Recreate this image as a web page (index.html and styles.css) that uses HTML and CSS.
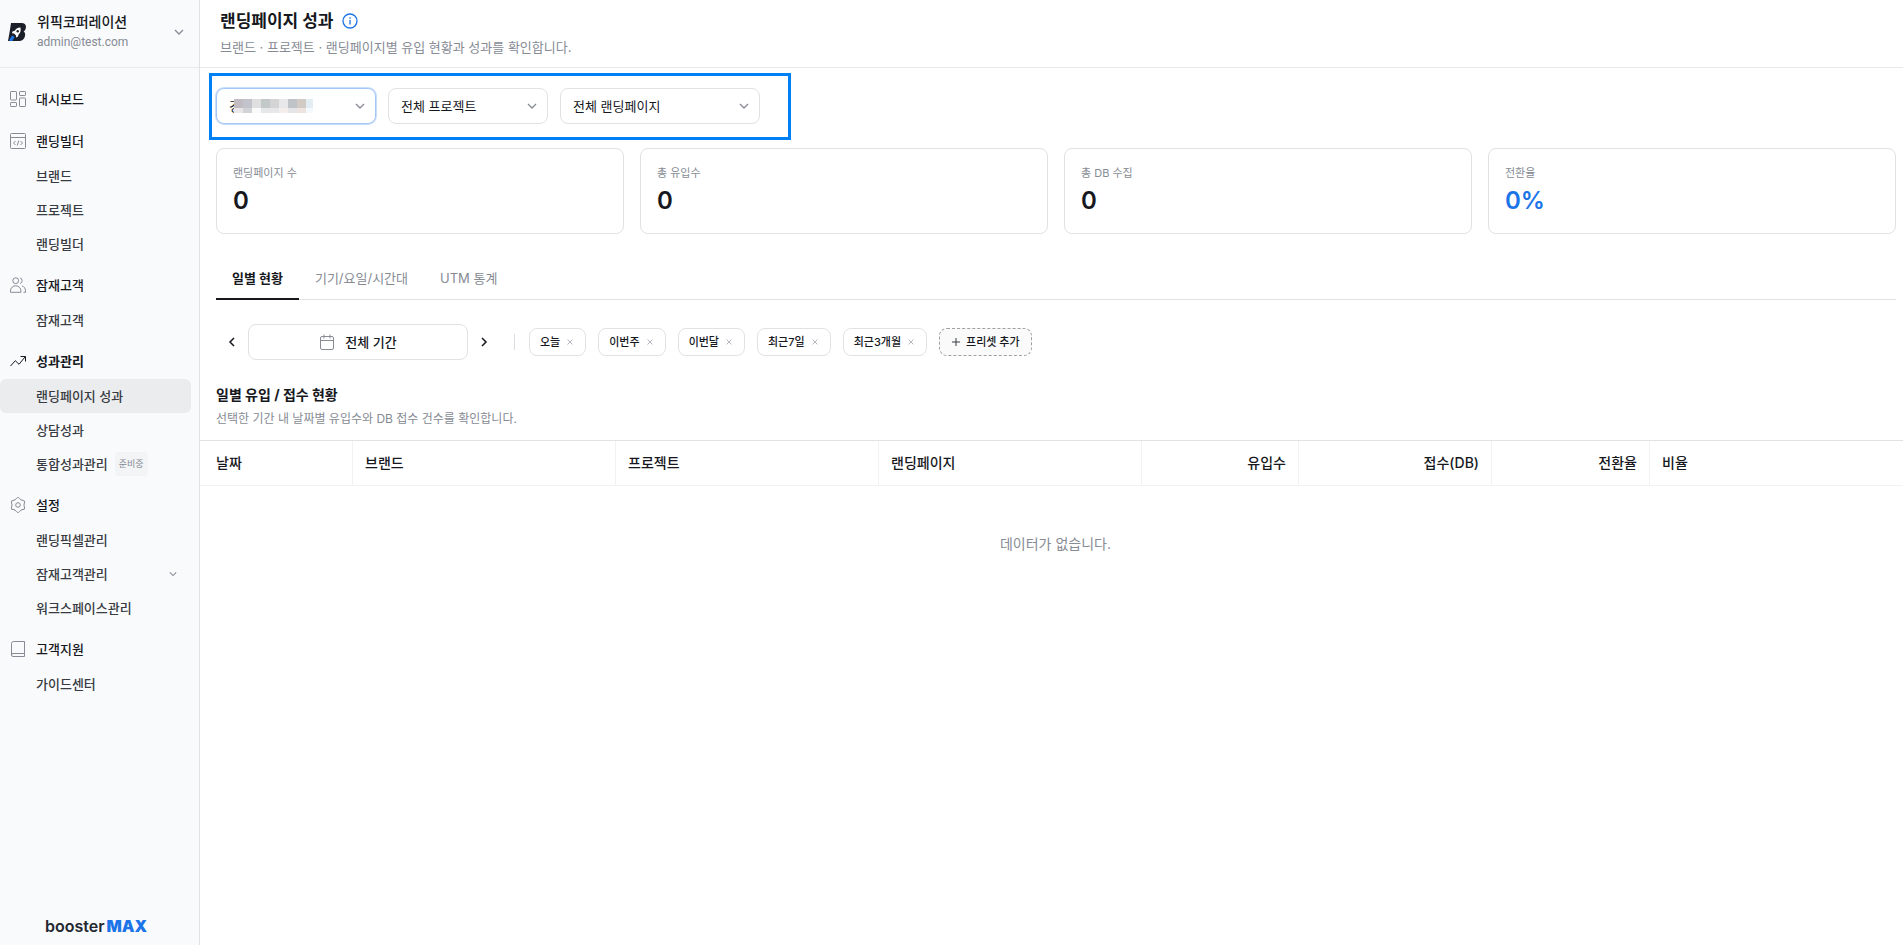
FILE: index.html
```html
<!DOCTYPE html>
<html lang="ko">
<head>
    <meta charset="UTF-8">
    <meta name="viewport" content="width=device-width, initial-scale=1.0">
    <title>랜딩페이지 성과</title>
    <link rel="stylesheet" href="styles.css">
</head>
<body>
    <div class="app">
        <aside class="sidebar">
            <button class="workspace" type="button">
                <svg class="workspace-logo" viewBox="0 0 18 18">
                    <path d="M3 0h10.500C17 0 18.500 2 17.800 5 17.500 6.800 16.600 8 15.600 8.600 17 9.600 17.400 11 17 13 16.300 16.400 14 18 11 18H0L1.600 9z" fill="#1b1f29"/>
                    <path d="M12.500 4.600C9.500 4.500 7.800 6 6.800 7.800L4.400 8.600 4 10.200l2 .3 2 2 .1 2 1.700-.8 1-2.400c1.700-1.500 2.200-3.500 1.700-6.700z" fill="#fff"/>
                    <circle cx="9.700" cy="8.200" r="1.200" fill="#1b1f29"/>
                    <path d="M5.300 13.200L2.500 18" stroke="#1c75e8" stroke-width="3"/>
                </svg>
                <span class="workspace-info">
                    <strong>위픽코퍼레이션</strong>
                    <span>admin@test.com</span>
                </span>
                <svg class="chevron" viewBox="0 0 10 10"><path d="M1 3l4 4 4-4"/></svg>
            </button>

            <nav class="menu">
                <div class="menu-group">
                    <a class="menu-title" href="#">
                        <svg class="menu-icon" viewBox="0 0 16 16"><rect x=".5" y=".5" width="6" height="8.500" rx=".6"/><rect x="9.500" y=".5" width="6" height="4" rx=".6"/><rect x=".5" y="11.500" width="6" height="4" rx=".6"/><rect x="9.500" y="7" width="6" height="8.500" rx=".6"/></svg>
                        대시보드
                    </a>
                </div>
                <div class="menu-group">
                    <a class="menu-title" href="#">
                        <svg class="menu-icon" viewBox="0 0 16 16"><rect x=".5" y=".5" width="15" height="15" rx="1"/><path d="M.5 4.500h15M5.500 8L3.500 10l2 2M10.500 8l2 2-2 2M8.800 7.500l-1.600 5"/></svg>
                        랜딩빌더
                    </a>
                    <a class="menu-item" href="#">브랜드</a>
                    <a class="menu-item" href="#">프로젝트</a>
                    <a class="menu-item" href="#">랜딩빌더</a>
                </div>
                <div class="menu-group">
                    <a class="menu-title" href="#">
                        <svg class="menu-icon" viewBox="0 0 16 16"><circle cx="5.700" cy="3.700" r="2.900"/><path d="M.5 15.300v-1.500a5.200 5 0 0 1 10.400 0v1.500zM10 .9a2.900 2.900 0 0 1 0 5.600M12 8.900c2.200.7 3.500 2.500 3.500 4.900v1.500h-2"/></svg>
                        잠재고객
                    </a>
                    <a class="menu-item" href="#">잠재고객</a>
                </div>
                <div class="menu-group">
                    <a class="menu-title current" href="#">
                        <svg class="menu-icon" viewBox="0 0 16 16"><path d="M.5 13L5.300 7.700 9 11.300 15 4M10.500 3.500h5v5"/></svg>
                        성과관리
                    </a>
                    <a class="menu-item active" href="#">랜딩페이지 성과</a>
                    <a class="menu-item" href="#">상담성과</a>
                    <a class="menu-item" href="#">통합성과관리 <span class="badge">준비중</span></a>
                </div>
                <div class="menu-group">
                    <a class="menu-title" href="#">
                        <svg class="menu-icon" viewBox="0 0 16 16">
                            <path id="tooth" d="M5 2.800C6.400 2 6.800.5 8 .5S9.600 2 11 2.800"/>
                            <use href="#tooth" transform="rotate(60 8 8)"/>
                            <use href="#tooth" transform="rotate(120 8 8)"/>
                            <use href="#tooth" transform="rotate(180 8 8)"/>
                            <use href="#tooth" transform="rotate(240 8 8)"/>
                            <use href="#tooth" transform="rotate(300 8 8)"/>
                            <circle cx="8" cy="8" r="2.300"/>
                        </svg>
                        설정
                    </a>
                    <a class="menu-item" href="#">랜딩픽셀관리</a>
                    <a class="menu-item" href="#">잠재고객관리
                        <svg class="chevron small" viewBox="0 0 10 10"><path d="M1 3l4 4 4-4"/></svg>
                    </a>
                    <a class="menu-item" href="#">워크스페이스관리</a>
                </div>
                <div class="menu-group">
                    <a class="menu-title" href="#">
                        <svg class="menu-icon" viewBox="0 0 16 16"><path d="M14.500 12.500V.5H3.500a2 2 0 0 0-2 2v11.500a1.500 1.500 0 0 0 1.500 1.500h11.500M1.500 14A1.500 1.500 0 0 1 3 12.500h11.500v3"/></svg>
                        고객지원
                    </a>
                    <a class="menu-item" href="#">가이드센터</a>
                </div>
            </nav>

            <div class="brand">booster<span>MAX</span></div>
        </aside>

        <main class="main">
            <header class="page-header">
                <h1>랜딩페이지 성과
                    <svg class="info-icon" viewBox="0 0 16 16"><circle cx="8" cy="8" r="7"/><path d="M8 7v4.500M8 4.300v1.500"/></svg>
                </h1>
                <p>브랜드 · 프로젝트 · 랜딩페이지별 유입 현황과 성과를 확인합니다.</p>
            </header>

            <div class="filters">
                <div class="select focused">
                    <select aria-label="브랜드"><option>경</option></select>
                    <svg class="mask" viewBox="0 0 79 14" shape-rendering="crispEdges">
                        <path fill="#c2bbc2" d="M0 0h9v9H0z"/><path fill="#c3c3cc" d="M9 0h9v9H9z"/><path fill="#dfdfe0" d="M18 0h9v9h-9z"/><path fill="#c3c8c8" d="M27 0h9v9h-9z"/><path fill="#d4d4d4" d="M36 0h9v9h-9z"/><path fill="#e8e8ea" d="M45 0h9v9h-9z"/><path fill="#c0c4c8" d="M54 0h9v9h-9z"/><path fill="#d2cac4" d="M63 0h9v9h-9z"/><path fill="#e2edf4" d="M72 0h7v9h-7z"/>
                        <path fill="#e9e7e9" d="M0 9h9v5H0z"/><path fill="#d2d3d6" d="M9 9h9v5H9z"/><path fill="#fafafa" d="M18 9h9v5h-9z"/><path fill="#e6e7e8" d="M27 9h18v5H27z"/><path fill="#f3eeec" d="M45 9h9v5h-9z"/><path fill="#e4e5e6" d="M54 9h9v5h-9z"/><path fill="#ede4e0" d="M63 9h9v5h-9z"/><path fill="#f4f9fd" d="M72 9h7v5h-7z"/>
                    </svg>
                    <svg class="chevron" viewBox="0 0 10 10"><path d="M1 3l4 4 4-4"/></svg>
                </div>
                <div class="select">
                    <select aria-label="프로젝트"><option>전체 프로젝트</option></select>
                    <svg class="chevron" viewBox="0 0 10 10"><path d="M1 3l4 4 4-4"/></svg>
                </div>
                <div class="select wide">
                    <select aria-label="랜딩페이지"><option>전체 랜딩페이지</option></select>
                    <svg class="chevron" viewBox="0 0 10 10"><path d="M1 3l4 4 4-4"/></svg>
                </div>
            </div>

            <section class="cards">
                <div class="card"><span>랜딩페이지 수</span><strong>0</strong></div>
                <div class="card"><span>총 유입수</span><strong>0</strong></div>
                <div class="card"><span>총 DB 수집</span><strong>0</strong></div>
                <div class="card"><span>전환율</span><strong class="blue">0%</strong></div>
            </section>

            <div class="tabs">
                <button class="tab active" type="button">일별 현황</button>
                <button class="tab" type="button">기기/요일/시간대</button>
                <button class="tab" type="button">UTM 통계</button>
            </div>

            <div class="period">
                <button class="arrow" type="button" aria-label="이전"><svg viewBox="0 0 10 10"><path d="M7 1L3 5l4 4"/></svg></button>
                <button class="period-button" type="button">
                    <svg viewBox="0 0 16 16"><rect x="1.500" y="2.500" width="13" height="13" rx="1.500"/><path d="M1.500 6.500h13M5 .5v4M11 .5v4"/></svg>
                    전체 기간
                </button>
                <button class="arrow" type="button" aria-label="다음"><svg viewBox="0 0 10 10"><path d="M3 1l4 4-4 4"/></svg></button>
                <span class="divider"></span>
                <div class="presets">
                    <button class="chip" type="button">오늘 <svg viewBox="0 0 10 10"><path d="M2.500 2.500l5 5M7.500 2.500l-5 5"/></svg></button>
                    <button class="chip" type="button">이번주 <svg viewBox="0 0 10 10"><path d="M2.500 2.500l5 5M7.500 2.500l-5 5"/></svg></button>
                    <button class="chip" type="button">이번달 <svg viewBox="0 0 10 10"><path d="M2.500 2.500l5 5M7.500 2.500l-5 5"/></svg></button>
                    <button class="chip" type="button">최근7일 <svg viewBox="0 0 10 10"><path d="M2.500 2.500l5 5M7.500 2.500l-5 5"/></svg></button>
                    <button class="chip" type="button">최근3개월 <svg viewBox="0 0 10 10"><path d="M2.500 2.500l5 5M7.500 2.500l-5 5"/></svg></button>
                    <button class="chip add" type="button"><svg viewBox="0 0 10 10"><path d="M5 1v8M1 5h8"/></svg> 프리셋 추가</button>
                </div>
            </div>

            <div class="section-title">
                <h2>일별 유입 / 접수 현황</h2>
                <p>선택한 기간 내 날짜별 유입수와 DB 접수 건수를 확인합니다.</p>
            </div>

            <table class="report">
                <colgroup>
                    <col class="col-date"><col class="col-name"><col class="col-name"><col class="col-name">
                    <col class="col-visit"><col class="col-db"><col class="col-rate"><col class="col-ratio">
                </colgroup>
                <thead>
                    <tr>
                        <th>날짜</th>
                        <th>브랜드</th>
                        <th>프로젝트</th>
                        <th>랜딩페이지</th>
                        <th class="right">유입수</th>
                        <th class="right">접수(DB)</th>
                        <th class="right">전환율</th>
                        <th>비율</th>
                    </tr>
                </thead>
                <tbody>
                    <tr><td class="empty" colspan="8">데이터가 없습니다.</td></tr>
                </tbody>
            </table>
        </main>
    </div>
</body>
</html>
```
FILE: styles.css
```css
* {
    box-sizing: border-box;
}
body {
    margin: 0;
    font-family: Inter, "Noto Sans CJK KR", sans-serif;
    font-size: 13px;
    line-height: 20px;
    color: #16181d;
    background: #fff;
}
button, select {
    font-family: inherit;
    line-height: inherit;
    color: inherit;
    cursor: pointer;
}
h1, h2, p {
    margin: 0;
}
a {
    color: inherit;
    text-decoration: none;
}
svg {
    flex: none;
    fill: none;
    stroke: currentColor;
}
.app {
    display: flex;
    min-height: 100vh;
}

/* sidebar */
.sidebar {
    width: 200px;
    flex: none;
    display: flex;
    flex-direction: column;
    background: #f9fafc;
    border-right: 1px solid #e1e2e4;
}
.workspace {
    display: flex;
    align-items: center;
    height: 68px;
    padding: 0 15px 4px 8px;
    border: none;
    border-bottom: 1px solid #e8e9eb;
    background: none;
    text-align: left;
}
.workspace-logo {
    width: 18px;
    height: 18px;
    stroke: none;
}
.workspace-info {
    flex: 1;
    display: flex;
    flex-direction: column;
    margin-left: 11px;
    font-family: Roboto, "Noto Sans CJK KR", sans-serif;
    font-size: 12px;
    color: #868b94;
}
.workspace-info strong {
    font-size: 14px;
    font-weight: 500;
    color: #16181d;
}
.chevron {
    width: 10px;
    height: 10px;
    color: #868b94;
    stroke-width: 1.3;
}
.chevron.small {
    width: 8px;
    height: 8px;
    margin-left: auto;
}
.menu {
    flex: 1;
    padding: 13px 8px 0 0;
}
.menu-group {
    margin-bottom: 6px;
}
.menu-title {
    display: flex;
    align-items: center;
    gap: 10px;
    height: 36px;
    padding-left: 10px;
    font-weight: 500;
}
.menu-title.current {
    font-weight: 700;
}
.menu-icon {
    width: 16px;
    height: 16px;
    color: #868b94;
}
.current .menu-icon {
    color: #16181d;
}
.menu-item {
    display: flex;
    align-items: center;
    height: 34px;
    padding: 0 14px 0 36px;
    border-radius: 6px;
    font-weight: 500;
    color: #383b42;
}
.menu-item.active {
    background: #ebecee;
}
.badge {
    margin-left: 7px;
    padding: 0 4px;
    border-radius: 4px;
    background: #f3f4f6;
    font-size: 9px;
    line-height: 24px;
    font-weight: 400;
    color: #868b94;
}
.brand {
    padding: 0 0 9px 45px;
    font-size: 16px;
    font-weight: 600;
    color: #23272f;
}
.brand span {
    margin-left: 2px;
    font-weight: 900;
    color: #1c75e8;
}

/* main */
.main {
    flex: 1;
    min-width: 0;
}
.page-header {
    height: 68px;
    padding: 8px 20px 0;
    border-bottom: 1px solid #e8e9eb;
}
.page-header h1 {
    display: flex;
    align-items: center;
    gap: 8px;
    font-size: 17px;
    line-height: 26px;
    font-weight: 700;
}
.info-icon {
    width: 16px;
    height: 16px;
    color: #1c75e8;
    stroke-width: 1.3;
}
.page-header p {
    margin-top: 3px;
    color: #868b94;
}
.filters {
    display: flex;
    gap: 12px;
    width: fit-content;
    margin: 5px 0 0 9px;
    padding: 12px 28px 13px 4px;
    border: 3px solid #0080f5;
}
.select {
    position: relative;
    width: 160px;
}
.select.wide {
    width: 200px;
}
.select select {
    display: block;
    width: 100%;
    height: 36px;
    padding: 0 32px 0 12px;
    border: 1px solid #e1e2e4;
    border-radius: 8px;
    background: #fff;
    appearance: none;
    font-size: 13px;
}
.select.focused select {
    border-color: #a4c6f7;
    box-shadow: 0 0 0 1px #c9defb;
}
.select .chevron {
    position: absolute;
    right: 11px;
    top: 13px;
    pointer-events: none;
}
.mask {
    position: absolute;
    left: 18px;
    top: 11px;
    width: 79px;
    height: 14px;
    stroke: none;
    pointer-events: none;
}
.cards {
    display: grid;
    grid-template-columns: repeat(4, 1fr);
    gap: 16px;
    padding: 8px 7px 0 16px;
}
.card {
    display: flex;
    flex-direction: column;
    gap: 4px;
    padding: 16px;
    border: 1px solid #e1e2e4;
    border-radius: 8px;
}
.card span {
    font-size: 11px;
    line-height: 16px;
    color: #868b94;
}
.card strong {
    font-size: 24px;
    line-height: 32px;
    font-weight: 600;
}
.card .blue {
    color: #1c75e8;
}
.tabs {
    display: flex;
    margin: 24px 7px 0 16px;
    box-shadow: inset 0 -1px #e1e2e4;
}
.tab {
    height: 42px;
    padding: 0 16px;
    border: none;
    border-bottom: 2px solid transparent;
    background: none;
    font-size: 13px;
    color: #868b94;
}
.tab.active {
    border-color: #16181d;
    font-weight: 700;
    color: #16181d;
}
.period {
    display: flex;
    align-items: center;
    padding: 24px 7px 0 16px;
}
.arrow {
    width: 32px;
    height: 32px;
    padding: 0;
    border: none;
    background: none;
}
.arrow svg {
    display: block;
    width: 10px;
    height: 10px;
    margin: 0 auto;
    stroke-width: 1.5;
}
.period-button {
    display: flex;
    align-items: center;
    justify-content: center;
    gap: 10px;
    width: 220px;
    height: 36px;
    border: 1px solid #e1e2e4;
    border-radius: 8px;
    background: #fff;
    font-size: 13px;
    font-weight: 500;
}
.period-button svg {
    width: 16px;
    height: 16px;
    color: #868b94;
}
.divider {
    width: 1px;
    height: 16px;
    margin: 0 14px;
    background: #dcdee3;
}
.presets {
    display: flex;
    gap: 12px;
}
.chip {
    display: flex;
    align-items: center;
    gap: 5px;
    height: 28px;
    padding: 0 10px;
    border: 1px solid #e1e2e4;
    border-radius: 8px;
    background: #fff;
    font-size: 11px;
    font-weight: 500;
}
.chip svg {
    width: 10px;
    height: 10px;
    color: #b4b7bd;
}
.chip.add {
    padding: 0 11px;
    border: 1px dashed #a0a0a0;
    background: #fafafa;
}
.chip.add svg {
    color: #383b42;
}
.section-title {
    padding: 24px 16px 11px;
}
.section-title h2 {
    font-size: 14px;
    line-height: 22px;
    font-weight: 700;
}
.section-title p {
    margin-top: 3px;
    font-size: 12px;
    color: #868b94;
}
.report {
    width: 100%;
    table-layout: fixed;
    border-collapse: separate;
    border-spacing: 0;
    border-top: 1px solid #e1e2e4;
    font-size: 14px;
}
.col-date {
    width: 153px;
}
.col-name {
    width: 263px;
}
.col-visit {
    width: 157px;
}
.col-db {
    width: 193px;
}
.col-rate {
    width: 158px;
}
.col-ratio {
    width: 253px;
}
.report th {
    height: 45px;
    padding: 0 12px;
    border-right: 1px solid #f1f2f4;
    border-bottom: 1px solid #f1f2f4;
    font-weight: 500;
    text-align: left;
}
.report th:first-child {
    padding-left: 16px;
}
.report th:last-child {
    border-right: none;
}
.report th.right {
    text-align: right;
}
.report .empty {
    height: 116px;
    padding: 0 0 0 8px;
    text-align: center;
    color: #868b94;
}
```
